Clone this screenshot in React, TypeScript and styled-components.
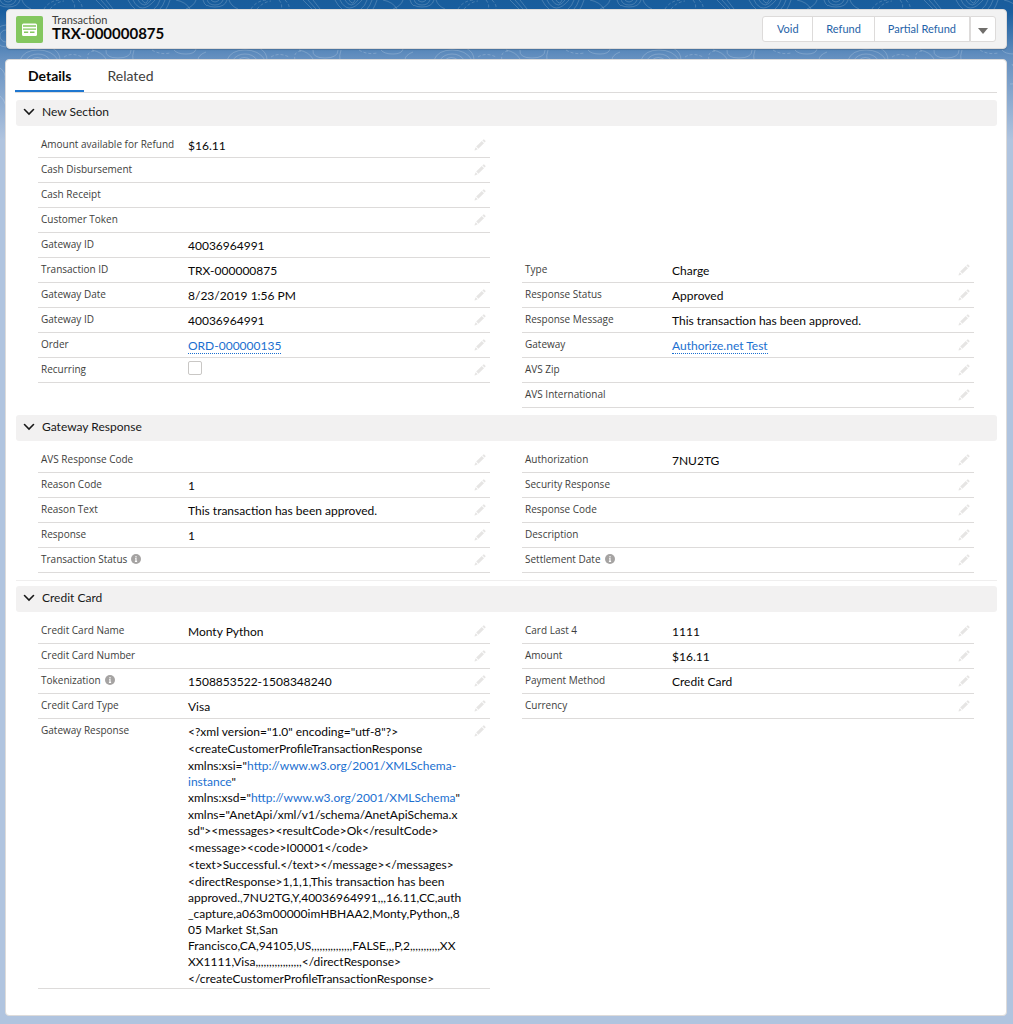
import React from 'react';
import styled, { createGlobalStyle } from 'styled-components';

const GlobalStyle = createGlobalStyle`
  *, *::before, *::after { box-sizing: border-box; }
  body {
    margin: 0;
    background: #b0c4df;
    color: #080707;
    font-family: Lato, 'Open Sans', sans-serif;
    font-size: 12px;
    line-height: 16px;
  }
  button, input { font: inherit; }
`;

const Page = styled.div`
  position: relative;
  display: flex;
  flex-direction: column;
  gap: 10px;
  min-height: 100vh;
  padding: 9px 6px 8px 5px;
  background: linear-gradient(#195d9c 0, #195e9f 12px, #6590c0 58px, #b0c4df 140px);
`;

const Backdrop = styled.svg`
  position: absolute;
  top: 0;
  left: 0;
  width: 100%;
  height: 130px;
`;

const Header = styled.header`
  position: relative;
  display: flex;
  align-items: center;
  gap: 9px;
  height: 40px;
  margin-left: 1px;
  padding: 0 10px 0 9px;
  background: #f2f2f2;
  border: 1px solid #dddbda;
  border-radius: 4px;
  box-shadow: 0 1px 1px rgba(0, 0, 0, 0.15);
`;

const EntityIcon = styled.svg`
  width: 27px;
  height: 27px;
  border-radius: 2px;
  background: #84c75f;
`;

const Heading = styled.div`
  flex: 1;
  padding-bottom: 3px;
`;

const Eyebrow = styled.p`
  margin: 0;
  color: #3e3e3c;
  font-size: 11px;
  line-height: 12px;
`;

const Title = styled.h1`
  margin: 0;
  font-size: 15px;
  font-weight: 700;
  line-height: 15px;
`;

const Actions = styled.div`
  display: flex;
`;

const Action = styled.button<{ $separate?: boolean }>`
  min-width: ${(p) => (p.$separate ? '0' : '51px')};
  height: 26px;
  margin: 0 0 0 ${(p) => (p.$separate ? '0' : '-1px')};
  padding: 0 ${(p) => (p.$separate ? '7px' : '13px')};
  background: #fff;
  border: 1px solid #dddbda;
  color: #1f63a8;
  font-size: 11px;
  line-height: 24px;
  cursor: pointer;
  &:first-child { border-radius: 3px 0 0 3px; }
  &:last-child { border-radius: 0 3px 3px 0; }
`;

const Caret = styled.svg`
  display: block;
  width: 10px;
  height: 6px;
  margin-top: 4px;
`;

const Card = styled.main`
  position: relative;
  flex: 1;
  padding: 0 9px 19px 10px;
  background: #fff;
  border: 1px solid #dddbda;
  border-radius: 4px;
`;

const Tabs = styled.nav`
  display: flex;
  gap: 10px;
  margin: 0 0 7px -1px;
  border-bottom: 1px solid #dddbda;
`;

const Tab = styled.button<{ $active?: boolean }>`
  height: 32px;
  padding: 2px 13px 0;
  background: none;
  border: 0;
  border-bottom: 2px solid ${(p) => (p.$active ? '#1f77d0' : 'transparent')};
  color: ${(p) => (p.$active ? '#080707' : '#3e3e3c')};
  font-size: 14px;
  font-weight: ${(p) => (p.$active ? 700 : 400)};
  cursor: pointer;
`;

const Section = styled.section<{ $ruled?: boolean }>`
  padding-bottom: 7px;
  border-bottom: ${(p) => (p.$ruled ? '1px solid #efeeee' : '0')};
  margin-bottom: ${(p) => (p.$ruled ? '5px' : '0')};
`;

const SectionHead = styled.h2`
  margin: 0 0 7px;
  font-size: 12px;
  font-weight: 400;
`;

const SectionToggle = styled.button`
  display: flex;
  align-items: center;
  gap: 7px;
  width: 100%;
  height: 26px;
  padding: 0 7px 2px;
  background: #f2f1f1;
  border: 0;
  border-radius: 3px;
  color: #181818;
  cursor: pointer;
`;

const Columns = styled.div`
  display: grid;
  grid-template-columns: 1fr 1fr;
  gap: 32px;
  padding: 0 23px 0 22px;
`;

const Column = styled.dl<{ $skip: number }>`
  min-width: 0;
  margin: ${(p) => p.$skip * 25}px 0 0;
`;

const Row = styled.div`
  display: grid;
  grid-template-columns: 147px 1fr auto;
  min-height: 25px;
  padding: 0 4px 0 3px;
  border-bottom: 1px solid #dddbda;
`;

const Term = styled.dt`
  display: flex;
  align-items: center;
  gap: 4px;
  height: 22px;
  color: #3e3e3c;
  font-family: 'Open Sans', 'Noto Sans', sans-serif;
  font-size: 10px;
`;

const Value = styled.dd<{ $control?: boolean }>`
  min-width: 0;
  margin: 0;
  padding: ${(p) => (p.$control ? '3px' : '5px')} 0 1px;
`;

const RecordLink = styled.a`
  display: inline-block;
  border-bottom: 1px dotted #1b6fd0;
  color: #1b6fd0;
  line-height: 15px;
  text-decoration: none;
`;

const PlainLink = styled.a`
  color: #1b6fd0;
  text-decoration: none;
`;

const Checkbox = styled.input`
  appearance: none;
  display: block;
  width: 14px;
  height: 14px;
  margin: 0;
  background: #fff;
  border: 1px solid #c9c7c5;
  border-radius: 2px;
`;

const EditButton = styled.button`
  align-self: start;
  display: block;
  height: 24px;
  padding: 0;
  background: none;
  border: 0;
  cursor: pointer;
`;

const PencilIcon = styled.svg`
  display: block;
  width: 12px;
  height: 12px;
  fill: #e6e5e4;
`;

const Xml = styled.div`
  display: grid;
  gap: 1px;
`;

const XmlPart = styled.div`
  white-space: nowrap;
`;

const Pencil = () => (
  <PencilIcon viewBox="0 0 12 12" aria-hidden="true">
    <path d="M2.2 7.6 7.8 2l2.2 2.2-5.6 5.6z" />
    <path d="M8.4 1.4 9.2.6q.5-.4 1 0l1.2 1.2q.4.5 0 1l-.8.8zM1.7 8.3l2 2L.9 11.4q-.5.1-.4-.4z" />
  </PencilIcon>
);

const Info = () => (
  <svg width="10" height="10" viewBox="0 0 10 10" role="img" aria-label="Help">
    <circle cx="5" cy="5" r="5" fill="#a5a3a2" />
    <path d="M5 2.1v1.3M4.2 4.6H5v2.7M3.9 7.4h2.2" stroke="#fff" strokeWidth="1.1" fill="none" />
  </svg>
);

const Contours = () => (
  <Backdrop aria-hidden="true">
    <defs>
      <pattern id="contours" width="207" height="130" patternUnits="userSpaceOnUse">
        <g fill="none" stroke="#fff" strokeOpacity="0.24" strokeWidth="0.8">
          <path d="M-4 0q2 7 12 7t12-7M0 0q2 5 8 5t8-5M4 0q4 4 8 0M203 0q1 4 4 6" />
          <path d="M22 0q2 6 9 9M196 0q-2 6-10 9M176 0q10 2 14 9" />
          <path d="M44 9q5-8 15-9M50 9q6-7 14-8M72 0q4 5 2 9M78 0q5 5 4 9" strokeDasharray="3 2" />
          <path d="M96 0l9 9M101 0l8 9M106 0l7 9M128 0q3 6 7 9M133 0q8 16 22 0M138 0q6 10 13 0M142 0q4 6 6 0M160 0q-2 6-6 9M165 0q-2 6-5 9M170 0q-2 6-4 9" />
          <path d="M20 60q4-10 18-10t20 10M26 60q4-6 12-6t12 6M31 60q6-5 13 0M52 48q8 4 8 12" />
          <path d="M64 57q8-5 18 0M152 50q8 5 18 3M88 60q-2-8 6-9" strokeDasharray="3 2" />
          <path d="M92 50q10 2 14 9M106 50q-1 8 12 8t13-8M174 50q3 4 12 4t10-5M134 50q-2 6-1 10M206 52q-8 3-8 8" />
          <circle cx="6" cy="36" r="6" />
          <circle cx="6" cy="36" r="11" />
          <path d="M0 68q6 4 5 12M184 64q3 7 12 10M182 84q10-2 14 8M0 96q4 3 6 10" />
        </g>
      </pattern>
    </defs>
    <rect width="100%" height="130" fill="url(#contours)" />
  </Backdrop>
);

type Field = {
  label: string;
  value?: React.ReactNode;
  info?: boolean;
  locked?: boolean;
  checkbox?: boolean;
};

const FieldRow = ({ label, value, info, locked, checkbox }: Field) => (
  <Row>
    <Term>
      {checkbox ? <label htmlFor="recurring">{label}</label> : label}
      {info && <Info />}
    </Term>
    <Value $control={checkbox}>{checkbox ? <Checkbox id="recurring" type="checkbox" /> : value}</Value>
    {!locked && (
      <EditButton type="button" aria-label={`Edit ${label}`}>
        <Pencil />
      </EditButton>
    )}
  </Row>
);

const xml = (
  <Xml>
    <XmlPart>{'<?xml version="1.0" encoding="utf-8"?>'}</XmlPart>
    <XmlPart>{'<createCustomerProfileTransactionResponse'}</XmlPart>
    <XmlPart>
      {'xmlns:xsi="'}
      <PlainLink href="#xsi">http://www.w3.org/2001/XMLSchema-<br />instance</PlainLink>"<br />
      {'xmlns:xsd="'}
      <PlainLink href="#xsd">http://www.w3.org/2001/XMLSchema</PlainLink>"
    </XmlPart>
    <XmlPart>
      {'xmlns="AnetApi/xml/v1/schema/AnetApiSchema.x'}<br />
      {'sd"><messages><resultCode>Ok</resultCode>'}
    </XmlPart>
    <XmlPart>{'<message><code>I00001</code>'}</XmlPart>
    <XmlPart>{'<text>Successful.</text></message></messages>'}</XmlPart>
    <XmlPart>
      {'<directResponse>1,1,1,This transaction has been'}<br />
      approved.,7NU2TG,Y,40036964991,,,16.11,CC,auth<br />
      _capture,a063m00000imHBHAA2,Monty,Python,,8<br />
      05 Market St,San<br />
      Francisco,CA,94105,US,,,,,,,,,,,,,,,FALSE,,,P,2,,,,,,,,,,,XX<br />
      {'XX1111,Visa,,,,,,,,,,,,,,,,,</directResponse>'}
    </XmlPart>
    <XmlPart>{'</createCustomerProfileTransactionResponse>'}</XmlPart>
  </Xml>
);

const sections: { title: string; ruled?: boolean; skip?: number; left: Field[]; right: Field[] }[] = [
  {
    title: 'New Section',
    skip: 5,
    left: [
      { label: 'Amount available for Refund', value: '$16.11' },
      { label: 'Cash Disbursement' },
      { label: 'Cash Receipt' },
      { label: 'Customer Token' },
      { label: 'Gateway ID', value: '40036964991', locked: true },
      { label: 'Transaction ID', value: 'TRX-000000875', locked: true },
      { label: 'Gateway Date', value: '8/23/2019 1:56 PM' },
      { label: 'Gateway ID', value: '40036964991' },
      { label: 'Order', value: <RecordLink href="#order">ORD-000000135</RecordLink> },
      { label: 'Recurring', checkbox: true },
    ],
    right: [
      { label: 'Type', value: 'Charge' },
      { label: 'Response Status', value: 'Approved' },
      { label: 'Response Message', value: 'This transaction has been approved.' },
      { label: 'Gateway', value: <RecordLink href="#gateway">Authorize.net Test</RecordLink> },
      { label: 'AVS Zip' },
      { label: 'AVS International' },
    ],
  },
  {
    title: 'Gateway Response',
    ruled: true,
    left: [
      { label: 'AVS Response Code' },
      { label: 'Reason Code', value: '1' },
      { label: 'Reason Text', value: 'This transaction has been approved.' },
      { label: 'Response', value: '1' },
      { label: 'Transaction Status', info: true },
    ],
    right: [
      { label: 'Authorization', value: '7NU2TG' },
      { label: 'Security Response' },
      { label: 'Response Code' },
      { label: 'Description' },
      { label: 'Settlement Date', info: true },
    ],
  },
  {
    title: 'Credit Card',
    left: [
      { label: 'Credit Card Name', value: 'Monty Python' },
      { label: 'Credit Card Number' },
      { label: 'Tokenization', info: true, value: '1508853522-1508348240' },
      { label: 'Credit Card Type', value: 'Visa' },
      { label: 'Gateway Response', value: xml },
    ],
    right: [
      { label: 'Card Last 4', value: '1111' },
      { label: 'Amount', value: '$16.11' },
      { label: 'Payment Method', value: 'Credit Card' },
      { label: 'Currency' },
    ],
  },
];

export default function App() {
  return (
    <Page>
      <GlobalStyle />
      <Contours />
      <Header>
        <EntityIcon viewBox="0 0 27 27" aria-hidden="true">
          <rect x="6" y="7.500" width="15" height="12.500" rx="1.500" fill="#fff" />
          <path d="M7 9.200h13v1.600H7zM7 12.500h13v1.200H7zM8 15.500h4.200v1.500H8zM14 15.500h4.500v1.500H14z" fill="#84c75f" />
        </EntityIcon>
        <Heading>
          <Eyebrow>Transaction</Eyebrow>
          <Title>TRX-000000875</Title>
        </Heading>
        <Actions>
          <Action type="button">Void</Action>
          <Action type="button">Refund</Action>
          <Action type="button">Partial Refund</Action>
          <Action type="button" $separate aria-label="More actions">
            <Caret viewBox="0 0 10 6" aria-hidden="true"><path d="M0 0h10L5 6z" fill="#706e6b" /></Caret>
          </Action>
        </Actions>
      </Header>
      <Card>
        <Tabs aria-label="Record views">
          <Tab type="button" $active>Details</Tab>
          <Tab type="button">Related</Tab>
        </Tabs>
        {sections.map((s) => (
          <Section key={s.title} $ruled={s.ruled}>
            <SectionHead>
              <SectionToggle type="button" aria-expanded="true">
                <svg width="12" height="8" viewBox="0 0 12 8" fill="none" stroke="#181818" strokeWidth="1.6" strokeLinecap="round" aria-hidden="true">
                  <path d="M1.500 1.500 6 6l4.500-4.500" />
                </svg>
                {s.title}
              </SectionToggle>
            </SectionHead>
            <Columns>
              <Column $skip={0}>{s.left.map((f, i) => <FieldRow key={i} {...f} />)}</Column>
              <Column $skip={s.skip ?? 0}>{s.right.map((f, i) => <FieldRow key={i} {...f} />)}</Column>
            </Columns>
          </Section>
        ))}
      </Card>
    </Page>
  );
}
